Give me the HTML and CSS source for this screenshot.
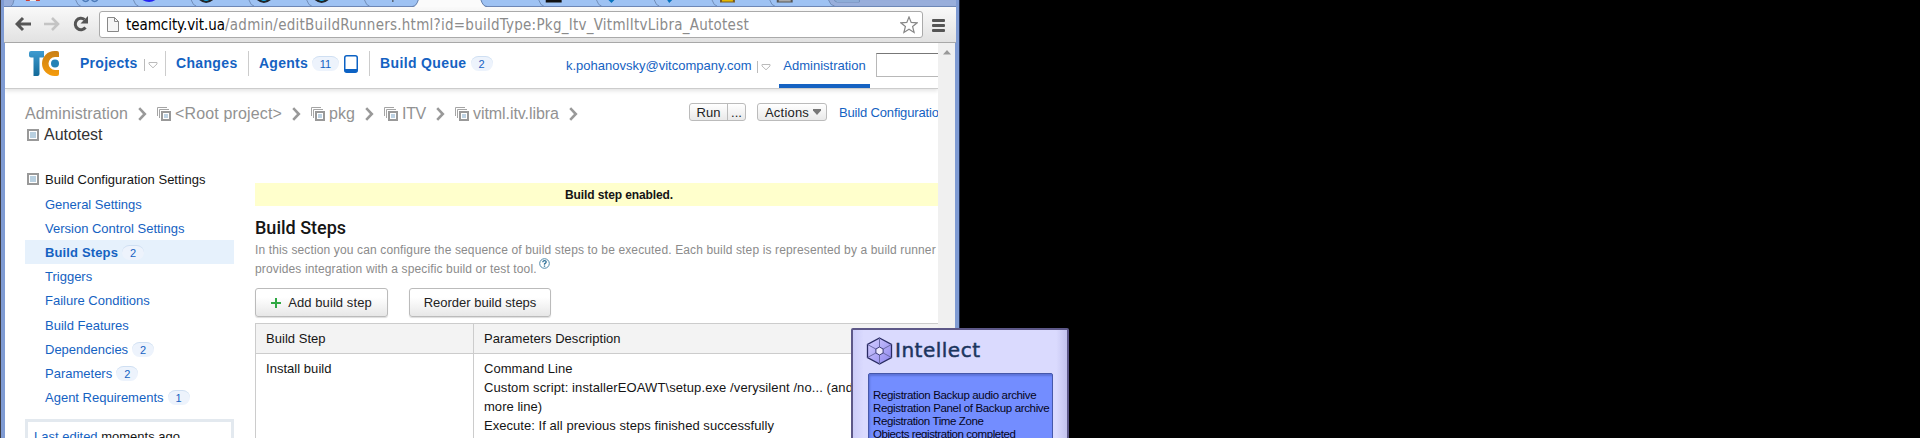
FILE: index.html
```
<!DOCTYPE html>
<html lang="en">
<head>
<meta charset="utf-8">
<title>Build Steps</title>
<link rel="stylesheet" href="styles.css">
</head>
<body>
<svg class="symbols" width="0" height="0">
  <symbol id="project" viewBox="0 0 14 14"><path d="M.5 9V.5H10M2.500 11V2.500H12" fill="none" stroke="#a5a5a5"/><rect x="5" y="5" width="8" height="8" fill="#fff" stroke="#999" stroke-width="2"/><rect x="7" y="7" width="4" height="4" fill="#bdd2e3"/></symbol>
  <symbol id="config" viewBox="0 0 12 12"><rect x="1" y="1" width="10" height="10" fill="#fff" stroke="#999" stroke-width="2"/><rect x="3" y="3" width="6" height="6" fill="#b9d0e0"/></symbol>
  <symbol id="chevron" viewBox="0 0 9 14"><path d="M1.200 1.200 6.800 7l-5.600 5.800" fill="none" stroke="#999" stroke-width="2.600"/></symbol>
  <symbol id="drop" viewBox="0 0 14 12"><path d="M.5 0v12" stroke="#bbb"/><path d="M5 3.500h8v1.500L9 8.800 5 5z" fill="#fff" stroke="#bbb"/></symbol>
</svg>
<div class="window">
  <svg class="tabs" width="956" height="7" viewBox="4 0 956 7">
    <rect x="4" width="956" height="7" fill="#98aedb"/>
    <path d="M11 6q2 0 3-6h818q2 6 6 6z" fill="#9ec2f3"/>
    <path d="M11 6q2 0 3-6M76 0q2 6 5 6M134 0q2 6 5 6M192 0q2 6 5 6M250 0q2 6 5 6M308 0q2 6 5 6M366 0q2 6 5 6M541 0q2 6 5 6M599 0q2 6 5 6M657 0q2 6 5 6M715 0q2 6 5 6M773 0q2 6 5 6M832 0q2 6 6 6" fill="none" stroke="#718db8"/>
    <path d="M4 6.500h956" stroke="#6d86b5"/>
    <path d="M414 7q4 0 6-7h63q2 7 6 7z" fill="#fbfbfb"/>
    <path d="M414 6.500q4 0 6-6.500M483 0q2 6.500 6 6.500" fill="none" stroke="#647eaa"/>
    <path d="M26 0h4v1h-4zM36 0h4v1h-4z" fill="#d33b30"/><path d="M30 0h6v1h-6z" fill="#eee"/>
    <path d="M83 0q3 3 6 0M92 0q3 3 6 0" fill="none" stroke="#4c7ab9" stroke-width="1.500"/>
    <path d="M143 0h13q-6 4-13 0z" fill="#2424f4"/>
    <path d="M200 0h14q-7 6-14 0zM258 0h14q-7 6-14 0zM316 0h14q-7 6-14 0z" fill="#202428"/>
    <path d="M204 0h6q-3 2-6 0zM262 0h6q-3 2-6 0zM320 0h6q-3 2-6 0z" fill="#16a7e0"/>
    <path d="M394.500 0v2" stroke="#333"/>
    <path d="M548 0h16v2.500h-16z" fill="#111"/>
    <path d="M611 0h6l-3 3zM670 0h5l-3 3z" fill="#0873bd"/>
    <path d="M723 0h15v2.500h-15z" fill="#775b20"/><path d="M725 0h11v1.500h-11z" fill="#e5b800"/>
    <path d="M780 0h16v2.500h-16z" fill="#555"/><path d="M782 0h12v1.500h-12z" fill="#aaa"/>
    <path d="M838 0q0 2 3 2h22V0z" fill="#a9caf6" stroke="#718db8"/>
  </svg>
  <div class="toolbar">
    <svg class="navicons" width="76" height="18" viewBox="0 0 76 18">
      <path d="M8 3 2 9l6 6M2 9h14" fill="none" stroke="#555" stroke-width="3"/>
      <path d="M37 3l6 6-6 6M43 9H29" fill="none" stroke="#c4c4c4" stroke-width="2.600"/>
      <path d="M70.500 12.500A5.700 5.700 0 1 1 69.500 4.500" fill="none" stroke="#555" stroke-width="3"/><path d="M73 1v7.500h-7.500z" fill="#555"/>
    </svg>
    <div class="address">
      <svg width="12" height="15" viewBox="0 0 12 15"><path d="M.5.5h7l4 4v10H.5z" fill="#f6f6f6" stroke="#888"/><path d="M7.500.5v4h4" fill="none" stroke="#888"/></svg>
      <span class="host">teamcity.vit.ua</span><span class="path">/admin/editBuildRunners.html?id=buildType:Pkg_Itv_VitmlItvLibra_Autotest</span>
      <svg class="star" width="18" height="18" viewBox="0 0 18 18"><path d="M9 1l2.200 5.400 6 .4-4.600 3.700 1.500 6L9 13.200l-5.100 3.300 1.500-6L.8 6.800l6-.4z" fill="#fff" stroke="#888" stroke-width="1.200"/></svg>
    </div>
    <div class="menu"><i></i><i></i><i></i></div>
  </div>
  <div class="viewport">
    <div class="page">
      <header class="header">
        <svg class="logo" width="31" height="26" viewBox="0 0 31 26">
          <defs><linearGradient id="tb" x2="0" y2="1"><stop stop-color="#3f9bd0"/><stop offset="1" stop-color="#126a99"/></linearGradient><linearGradient id="co" x2="0" y2="1"><stop stop-color="#c97f14"/><stop offset="1" stop-color="#f59c0c"/></linearGradient></defs>
          <path d="M2 0h13v6.500h-4.500V23q0 2-2 2h-4V6.500H2Q0 6.500 0 4.500v-2.500Q0 0 2 0z" fill="url(#tb)"/>
          <path d="M28 0q2 0 2 2v4h-4a6.500 6.500 0 0 0 0 13h4v4q0 2-2 2h-2.500a12.500 12.500 0 0 1 0-25z" fill="url(#co)"/>
          <circle cx="26" cy="12.500" r="4" fill="#2482b6"/>
        </svg>
        <nav class="nav">
          <div class="tab tab-projects"><b>Projects</b><svg width="14" height="12"><use href="#drop"/></svg></div>
          <div class="tab tab-changes"><b>Changes</b></div>
          <div class="tab tab-agents"><b>Agents</b><span class="pill wide">11</span><svg width="14" height="18" viewBox="0 0 14 18"><rect x=".75" y=".75" width="12.500" height="16.500" rx="2" fill="#fff" stroke="#0c62c4" stroke-width="1.500"/><path d="M1 14h12v3H1z" fill="#0c62c4"/></svg></div>
          <div class="tab tab-queue"><b>Build Queue</b><span class="pill">2</span></div>
        </nav>
        <div class="user"><span>k.pohanovsky@vitcompany.com</span><svg width="14" height="12"><use href="#drop"/></svg></div>
        <div class="admin">Administration</div>
        <div class="search"></div>
      </header>
      <div class="titlebar">
        <div class="crumbs">
          <div class="crumbline"><span class="c-admin">Administration</span><svg class="chev" width="9" height="14"><use href="#chevron"/></svg><svg width="14" height="14"><use href="#project"/></svg><span class="c-root">&lt;Root project&gt;</span><svg class="chev" width="9" height="14"><use href="#chevron"/></svg><svg width="14" height="14"><use href="#project"/></svg><span class="c-pkg">pkg</span><svg class="chev" width="9" height="14"><use href="#chevron"/></svg><svg width="14" height="14"><use href="#project"/></svg><span class="c-itv">ITV</span><svg class="chev" width="9" height="14"><use href="#chevron"/></svg><svg width="14" height="14"><use href="#project"/></svg><span class="c-libra">vitml.itv.libra</span><svg class="chev" width="9" height="14"><use href="#chevron"/></svg></div>
          <div class="crumbline current"><svg width="12" height="12"><use href="#config"/></svg><span>Autotest</span></div>
        </div>
        <div class="run"><span>Run</span><span class="more">...</span></div>
        <div class="actions">Actions<svg width="8" height="6" viewBox="0 0 8 6"><path d="M0 0h8v1.500L4 6 0 1.500z" fill="#777"/></svg></div>
        <span class="settings-link">Build Configuratio</span>
      </div>
      <div class="columns">
        <aside class="sidebar">
          <div class="side-title"><svg width="12" height="12"><use href="#config"/></svg>Build Configuration Settings</div>
          <div class="item">General Settings</div>
          <div class="item">Version Control Settings</div>
          <div class="item selected"><b>Build Steps</b><span class="pill">2</span></div>
          <div class="item">Triggers</div>
          <div class="item">Failure Conditions</div>
          <div class="item">Build Features</div>
          <div class="item">Dependencies<span class="pill">2</span></div>
          <div class="item">Parameters<span class="pill">2</span></div>
          <div class="item">Agent Requirements<span class="pill">1</span></div>
          <div class="edited"><span>Last edited</span> moments ago</div>
        </aside>
        <main class="main">
          <div class="banner">Build step enabled.</div>
          <h2>Build Steps</h2>
          <p class="note">In this section you can configure the sequence of build steps to be executed. Each build step is represented by a build runner<br>provides integration with a specific build or test tool. <svg class="help" width="11" height="11" viewBox="0 0 11 11"><circle cx="5.500" cy="5.500" r="4.800" fill="#fff" stroke="#4d89ab"/><path d="M3.800 4.300q0-1.600 1.700-1.600t1.700 1.400q0 .8-1.700 1.800v.8M5.500 7.600v1.200" fill="none" stroke="#2f7198" stroke-width="1.300"/></svg></p>
          <div class="buttons">
            <div class="btn add"><svg width="10" height="10" viewBox="0 0 10 10"><path d="M5 0v10M0 5h10" stroke="#2fa843" stroke-width="2"/></svg>Add build step</div>
            <div class="btn reorder">Reorder build steps</div>
          </div>
          <div class="table">
            <div class="cell head">Build Step</div><div class="cell head">Parameters Description</div>
            <div class="cell">Install build</div>
            <div class="cell">Command Line<br><span class="script">Custom script: installerEOAWT\setup.exe /verysilent /no... (and</span><br>more line)<br><span class="execute">Execute: If all previous steps finished successfully</span></div>
          </div>
        </main>
      </div>
    </div>
    <div class="scrollbar"><svg width="8" height="5" viewBox="0 0 8 5"><path d="M4 0l4 4.500H0z" fill="#999"/></svg></div>
  </div>
</div>
<div class="popup">
  <div class="brand">
    <svg width="27" height="28" viewBox="0 0 27 28"><defs><linearGradient id="hx" x2="1" y2="1"><stop stop-color="#d5d0ff"/><stop offset="1" stop-color="#8d84ee"/></linearGradient></defs><path d="M13.500 1 25.500 7.500v13L13.500 27 1.500 20.500v-13z" fill="url(#hx)" stroke="#292b62" stroke-width="1.300"/><path d="M13.500 1v26M1.500 7.500l24 13M25.500 7.500l-24 13" stroke="#6a69a6" stroke-width="1"/><path d="M13.500 10l3.600 2v4l-3.600 2-3.600-2v-4z" fill="#eeeaff" stroke="#3c3d78"/></svg>
    <span>Intellect</span>
  </div>
  <div class="log"><div class="l1">Registration Backup audio archive</div><div class="l2">Registration Panel of Backup archive</div><div class="l3">Registration Time Zone</div><div class="l4">Objects registration completed</div></div>
</div>
</body>
</html>
```
FILE: styles.css
```
* { box-sizing: border-box; }
body { margin: 0; height: 438px; overflow: hidden; background: #000; font: 13px/19px "Liberation Sans", Arial, sans-serif; color: #151515; position: relative; }
svg { display: block; flex: none; }
.symbols { position: absolute; }
.window { width: 960px; height: 438px; overflow: hidden; background: #7f9bd3; border-left: 1px solid #3c3c44; border-right: 1px solid #1f2c4c; padding: 0 3px; white-space: nowrap; }
.tabs { width: 952px; }
.toolbar { height: 36px; padding-left: 11px; display: flex; background: linear-gradient(#f9f9f9, #e2e2e2); border-bottom: 1px solid #a8a8a8; }
.navicons { margin-top: 8px; }
.address { flex: none; width: 824px; height: 27px; margin: 4px 0 0 8px; border: 1px solid #aaa; border-radius: 3px; background: #fff; display: flex; align-items: center; padding-left: 7px; font: 15px/20px "DejaVu Sans Condensed", "DejaVu Sans", sans-serif; font-stretch: condensed; }
.host { margin-left: 7px; color: #000; letter-spacing: -.049px; }
.path { color: #8b8b8b; letter-spacing: .254px; }
.star { margin-left: auto; margin-right: 4px; }
.menu { margin: 12px 0 0 9px; width: 13px; display: flex; flex-direction: column; gap: 2px; }
.menu i { height: 3px; border-radius: 1px; background: #555; }
.viewport { display: flex; height: 395px; background: #fff; margin: 0 1px; }
.page { width: 933px; overflow: hidden; }
.scrollbar { width: 17px; background: #f0f0f0; display: flex; justify-content: center; padding-top: 7px; }

.header { height: 46px; display: flex; border-bottom: 1px solid #ccc; box-shadow: 0 2px 4px #e4e4e4; color: #1562c2; }
.header > * { flex: none; }
.logo { margin: 8px 0 0 24px; }
.nav { display: flex; margin: 8px 0 0 20px; height: 25px; }
.tab { display: flex; align-items: center; font-size: 14px; border-right: 1px solid #ccc; padding-bottom: 1px; }
.tab-projects { width: 86px; gap: 6px; letter-spacing: .28px; }
.tab-projects svg { margin-top: 4px; }
.tab-changes { width: 83px; padding-left: 10px; letter-spacing: .34px; }
.tab-agents { width: 121px; padding-left: 10px; letter-spacing: .26px; }
.tab-agents svg { margin: 1px 0 0 5px; }
.tab-queue { width: 130px; padding-left: 10px; letter-spacing: .37px; border: 0; }
.pill { width: 22px; height: 15px; margin-left: 4px; border-radius: 8px; background: #edf3fc; border-top: 1px solid #cfdff2; font: 11px/14px "Liberation Sans", Arial, sans-serif; text-align: center; letter-spacing: 0; color: #1562c2; }
.pill.wide { width: 27px; }
.user { display: flex; gap: 5px; margin: 13px 0 0 66px; width: 204px; }
.user svg { margin-top: 5px; }
.admin { margin-left: 9px; width: 91px; text-align: center; padding-top: 13px; border-bottom: 4px solid #1562c2; height: 45px; }
.search { width: 90px; height: 24px; margin: 10px 0 0 6px; border: 1px solid #b8b8b8; border-top-color: #777; }

.titlebar { display: flex; padding: 14px 0 0 20px; height: 78px; }
.titlebar > * { flex: none; }
.crumbs { width: 664px; font-size: 16px; color: #929292; }
.crumbline { display: flex; align-items: center; height: 21px; }
.crumbline svg { margin-right: 4px; }
.crumbline .chev { margin: 1px 10px 0 10px; }
.c-admin { width: 103px; letter-spacing: .12px; }
.c-root { width: 107px; letter-spacing: .15px; }
.c-pkg { width: 26px; }
.c-itv { width: 24px; letter-spacing: -.3px; }
.c-libra { width: 86px; letter-spacing: -.06px; }
.current { color: #333; letter-spacing: -.03px; }
.current svg { margin: 0 5px 0 2px; }
.run, .actions { height: 18px; border: 1px solid #bbb; border-radius: 3px; background: linear-gradient(#fff, #e9e9e9); line-height: 17px; display: flex; color: #222; }
.run { width: 57px; }
.run span { width: 37px; text-align: center; }
.run .more { width: 18px; border-left: 1px solid #bbb; }
.actions { width: 70px; margin-left: 11px; padding-left: 7px; letter-spacing: .2px; gap: 4px; align-items: center; }
.settings-link { margin-left: 12px; color: #1562c2; line-height: 19px; letter-spacing: -.16px; }

.columns { display: flex; }
.sidebar { width: 209px; margin-left: 20px; flex: none; }
.side-title { height: 24px; margin-bottom: .6px; display: flex; align-items: center; gap: 6px; padding-left: 2px; }
.item { height: 24.200px; display: flex; align-items: center; padding: 1px 0 0 20px; color: #1562c2; }
.selected { background: #e6f1fc; }
.selected b { letter-spacing: .135px; }
.edited { margin-top: 10px; height: 60px; border: 3px solid #e3e9ef; padding: 5px 6px; }
.edited span { color: #1562c2; }
.main { width: 728px; flex: none; margin: 16px 0 0 21px; }
.banner { height: 23px; background: #ffc; text-align: center; font: bold 12px/24px "Liberation Sans", Arial, sans-serif; letter-spacing: -.1px; }
h2 { font: 500 18px/22px Roboto, sans-serif; margin: 11px 0 0; }
.note { margin: 2px 0 0; font-size: 12px; color: #8b8b8b; letter-spacing: .135px; }
.help { display: inline-block; vertical-align: 4px; margin: -6px 0 0 -1px; }
.buttons { display: flex; gap: 21px; margin-top: 9px; }
.btn { height: 29px; border: 1px solid #bbb; border-radius: 3px; background: linear-gradient(#fff 30%, #e7e7e7); box-shadow: 0 1px 1px #ddd; color: #222; display: flex; align-items: center; justify-content: center; gap: 7px; }
.add { width: 133px; letter-spacing: .08px; }
.reorder { width: 142px; }
.table { display: grid; grid-template-columns: 218px 510px; grid-template-rows: 30px 120px; margin-top: 6px; border: 1px solid #ccc; border-width: 1px 0 0 1px; }
.cell { padding: 5px 10px; border-right: 1px solid #ccc; letter-spacing: .035px; }
.head { background: #f3f3f3; border-bottom: 1px solid #ccc; }
.script { letter-spacing: .096px; }
.execute { letter-spacing: .046px; }

.popup { position: absolute; left: 851px; top: 328px; width: 218px; height: 112px; border: 2px solid #5d5888; border-radius: 2px 2px 0 0; background: linear-gradient(90deg, #ccccf8, #dadafe 5%, #dadafe 95%, #c3c3ee); padding: 7px 14px 0 15px; white-space: nowrap; }
.brand { display: flex; gap: 2px; height: 36px; margin-left: -2px; font: 20px/27px "DejaVu Sans", sans-serif; color: #1c355e; letter-spacing: .5px; -webkit-text-stroke: .5px #1c355e; }
.log { height: 80px; width: 185px; border: 1px solid #4658aa; border-radius: 2px 2px 0 0; background: #738dff; box-shadow: inset 1px 2px 2px #5c72d8; padding: 15px 0 0 4px; font-size: 11.500px; line-height: 13px; color: #05051a; }
.l1 { letter-spacing: -.34px; }
.l2 { letter-spacing: -.34px; }
.l3 { letter-spacing: -.38px; }
.l4 { letter-spacing: -.43px; }
```
